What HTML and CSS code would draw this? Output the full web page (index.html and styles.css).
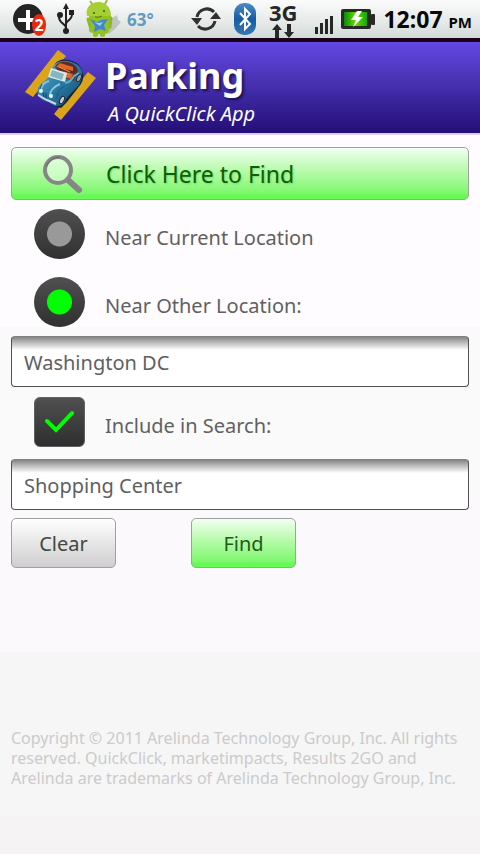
FILE: index.html
```html
<!DOCTYPE html>
<html lang="en">
<head>
<meta charset="utf-8">
<meta name="viewport" content="width=device-width, initial-scale=1">
<title>Parking</title>
<link rel="stylesheet" href="styles.css">
</head>
<body>
<div class="status">
  <svg class="plus" width="34" height="36" viewBox="0 0 34 36" aria-hidden="true">
    <circle cx="15" cy="18" r="15" fill="#242424"/>
    <path d="M13 9h4v8h8v4h-8v8h-4v-8H5v-4h8z" fill="#fff"/>
    <ellipse cx="26" cy="24" rx="7" ry="11" fill="#e5280f"/>
    <text x="26" y="30" text-anchor="middle" class="badge">2</text>
  </svg>
  <svg class="usb" width="18" height="32" viewBox="0 0 18 32" fill="none" stroke="#222" stroke-width="2" aria-hidden="true">
    <path d="M9 28V4M9 25C9 20 2 21 2 14M9 21c0-4 6-3 6-10"/>
    <path d="M9 0l3 6H6zM12 7h5v5h-5z" fill="#222" stroke="none"/>
    <circle cx="3" cy="12" r="3" fill="#222" stroke="none"/><circle cx="9" cy="28" r="3" fill="#222" stroke="none"/>
  </svg>
  <svg class="droid" width="36" height="38" viewBox="0 0 36 38" aria-hidden="true">
    <path d="M24 20l8-5 1 5 3 2-5 6-7 6z" fill="#aaa" opacity=".6"/>
    <path d="M8 5L5 1M20 4l2-4" stroke="#9bbb3c" stroke-width="2"/>
    <path d="M2 16C0 5 8 2 14 2s12 5 12 14z" fill="#a5cf32"/>
    <path d="M4 16h22l-2 15q0 3-4 3v2q-3 2-5 0v-2h-2v2q-3 2-5 0v-3q-4 0-4-3z" fill="#93c225"/>
    <path d="M3 19l2 7M26 18l-1 9" stroke="#8bb924" stroke-width="3" stroke-linecap="round"/>
    <circle cx="9" cy="13" r="1" fill="#415b16"/><circle cx="19" cy="11" r="1" fill="#415b16"/>
    <path d="M10 17q4 1 7-1" fill="none" stroke="#55741c"/>
    <path d="M5 19l7 3 4-2 7-1-4 6 2 6-6-2-6 3 1-6z" fill="#4384d5"/>
    <path d="M9 22l5 1 4-1-3 4z" fill="#9bd0f4"/>
  </svg>
  <span class="temp">63°</span>
  <svg class="sync" width="30" height="26" viewBox="0 0 30 26" fill="none" stroke="#303030" stroke-width="3" aria-hidden="true">
    <path d="M6 11A10 10 0 0 1 23 6M24 15A10 10 0 0 1 7 20"/>
    <path d="M0 12h11l-5 7zM19 13l6-7 5 7z" fill="#303030" stroke="none"/>
  </svg>
  <svg class="bt" width="22" height="32" viewBox="0 0 22 32" aria-hidden="true">
    <defs><linearGradient id="b" x2="0" y2="1"><stop stop-color="#4f8cc4"/><stop offset=".5" stop-color="#175ba5"/><stop offset="1" stop-color="#3677b4"/></linearGradient></defs>
    <rect width="22" height="32" rx="10" fill="url(#b)"/>
    <path d="M6 10l10 11-5 5V6l5 5L6 22" fill="none" stroke="#fff" stroke-width="2"/>
  </svg>
  <span class="net"><span>3G</span>
    <svg width="22" height="14" viewBox="0 0 22 14" fill="#282828" aria-hidden="true"><path d="M5 0l5 6H7v8H3V6H0zM15 0h4v8h3l-5 6-5-6h3z"/></svg>
  </span>
  <svg class="bars" width="18" height="20" viewBox="0 0 18 20" fill="#262626" aria-hidden="true"><path d="M0 12h3v7H0zM5 8h3v11H5zM10 4h3v15h-3zM15 1h3v18h-3z"/></svg>
  <svg class="battery" width="34" height="20" viewBox="0 0 34 20" aria-hidden="true">
    <defs><linearGradient id="g" x1="0" x2="1"><stop stop-color="#078b08"/><stop offset=".5" stop-color="#64d900"/><stop offset="1" stop-color="#16a907"/></linearGradient></defs>
    <rect width="30" height="20" rx="2" fill="#292929"/><rect x="30" y="5" width="4" height="11" rx="1" fill="#292929"/>
    <rect x="3" y="3" width="23" height="14" fill="url(#g)"/><path d="M16 2l-6 9h5l-3 7 10-10h-5l4-6z" fill="#fff"/>
  </svg>
  <span class="clock">12:07 <span class="pm">PM</span></span>
</div>
<header class="header">
  <svg class="logo" width="72" height="70" viewBox="0 0 72 70" aria-hidden="true">
    <defs><linearGradient id="c" x2="1" y2="1"><stop stop-color="#67b0cb"/><stop offset=".5" stop-color="#287ba5"/><stop offset="1" stop-color="#164565"/></linearGradient></defs>
    <path d="M33 0l8 6L8 47l-8-5zM63 22l8 6L36 70l-7-6z" fill="#dba51b"/>
    <path d="M30 14q4-6 14-4 10 2 13 10 3 7-1 14L42 52l-6 6-10-3z" fill="#15223d"/>
    <path d="M27 18Q32 9 43 11q11 2 14 10 1 7-3 14L41 49q-2 7-8 7-5 1-9-4-8-1-11-7-2-6 3-11l8-7z" fill="url(#c)"/>
    <path d="M30 17q4-7 13-5 8 2 10 8l-4 11-9-3z" fill="#5c2b25"/>
    <path d="M31 17l4-4 13 4v4l-4-1zM36 21l12 3-2 5-7-2z" fill="#df6428"/>
    <path d="M34 17l11 5M39 22l6 3" stroke="#f09142" stroke-width="1"/>
    <path d="M26 18l16 5-2 9-17-5z" fill="#d5e9ed"/>
    <path d="M27 20l12 4-2 6-12-4z" fill="#88b5bd"/>
    <path d="M40 33q6-1 9-7l5-3" fill="none" stroke="#5caec9" stroke-width="2"/>
    <path d="M24 31q-8 2-8 10M35 34q-10 4-10 12" fill="none" stroke="#84c5df" stroke-width="2"/>
    <path d="M17 34q-3 4-1 9M39 37q-7 2-7 11" fill="none" stroke="#1d587c" stroke-width="1"/>
    <path d="M18 42l1 6M21 43v6" stroke="#123b56" stroke-width="1"/>
    <path d="M13 45l9 5 9 4" fill="none" stroke="#c8d8e0" stroke-width="2"/>
    <circle cx="16" cy="41" r="2" fill="#e6fbff"/><circle cx="26" cy="46" r="2" fill="#e6fbff"/>
    <ellipse cx="37" cy="50" rx="2" ry="4" fill="#ccc" stroke="#1b2735" transform="rotate(25 37 50)"/>
    <ellipse cx="54" cy="28" rx="2" ry="4" fill="#8ba0aa" stroke="#1b2735" transform="rotate(25 54 28)"/>
  </svg>
  <div><h1>Parking</h1><p class="tagline">A QuickClick App</p></div>
</header>
<main class="main">
  <form class="form">
    <button class="btn green banner" type="button">
      <svg width="42" height="42" viewBox="0 0 42 42" fill="none" aria-hidden="true">
        <path d="M26 27l11 10" stroke="#858585" stroke-width="6" stroke-linecap="round"/>
        <circle cx="16" cy="17" r="13" fill="#dfffdc" fill-opacity=".6" stroke="#868686" stroke-width="4"/>
        <path d="M4 14Q8 4 18 4" stroke="#666" stroke-width="1"/>
      </svg>
      <span>Click Here to Find</span>
    </button>
    <label class="option first"><input class="radio" type="radio" name="near"><span>Near Current Location</span></label>
    <label class="option"><input class="radio" type="radio" name="near" checked><span>Near Other Location:</span></label>
    <input class="field" type="text" value="Washington DC" aria-label="Other location">
    <label class="option include">
      <span class="tick"><input type="checkbox" checked>
        <svg width="30" height="24" viewBox="0 0 30 24" fill="none" aria-hidden="true"><path d="M2 11l9 9L27 3" stroke="#0f0" stroke-width="4" stroke-linecap="round"/></svg>
      </span><span>Include in Search:</span></label>
    <input class="field" type="text" value="Shopping Center" aria-label="Search term">
    <div class="actions">
      <button class="btn grey" type="reset">Clear</button>
      <button class="btn green" type="button">Find</button>
    </div>
  </form>
</main>
<footer class="footer">Copyright © 2011 Arelinda Technology Group, Inc. All rights reserved. QuickClick, marketimpacts, Results 2GO and Arelinda are trademarks of Arelinda Technology Group, Inc.</footer>
</body>
</html>
```
FILE: styles.css
```css
* { box-sizing: border-box; }

body {
  margin: 0;
  min-height: 100vh;
  display: flex;
  flex-direction: column;
  font-family: "Noto Sans", "Open Sans", sans-serif;
  color: #606060;
  background: linear-gradient(#fefcfe 327px, #fafafa 327px, #fafafa 490px, #fbf9fb 490px, #fbf9fb 652px, #f6f6f6 652px, #f6f6f6 816px, #f5f3f4 816px);
}

.status {
  display: flex;
  align-items: center;
  height: 38px;
  padding: 0 8px 0 13px;
  background: linear-gradient(#fbfbfb, #e5e9e7 60%, #d2dad6);
  color: #080808;
}
.status svg { flex: none; }
.badge { font-size: 16px; font-weight: 700; fill: #fff; }
.usb { margin-left: 10px; }
.droid { margin-left: 10px; }
.temp { margin-left: 6px; font: 700 17px "Noto Sans", sans-serif; color: #6199c1; }
.sync { margin-left: auto; }
.bt { margin-left: 13px; }
.net { display: flex; flex-direction: column; align-items: center; margin-left: 13px; color: #262626; font-weight: 700; font-size: 22px; line-height: 24px; }
.bars { margin: 12px 0 0 18px; }
.battery { margin-left: 8px; }
.clock { margin-left: 8px; font-size: 23px; font-weight: 700; white-space: nowrap; }
.pm { font-size: 15px; }

.header {
  display: flex;
  align-items: flex-start;
  gap: 8px;
  height: 97px;
  padding: 8px 25px 0;
  border-top: 4px solid #1a0018;
  border-bottom: 2px solid #d8cff0;
  background: linear-gradient(#6448e4, #4731b0 45%, #230e78);
  color: #fff;
}
h1 { margin: 0; font-size: 36px; line-height: 52px; text-shadow: 2px 2px 3px #1b1050; }
.tagline { margin: 0 0 0 3px; font-size: 20px; line-height: 24px; font-style: italic; }

.main { padding: 12px 11px; }
.form { display: flex; flex-direction: column; }

.btn {
  height: 50px;
  border: 1px solid #a0a0a0;
  border-radius: 5px;
  font: 20px "Noto Sans", sans-serif;
  padding: 0;
}
.green { background: linear-gradient(#f2fff2, #b6fba9 45%, #80f76f 88%, #67fa55 92%); color: #1f5a1f; }
.grey { background: linear-gradient(#fff, #cfcdcf); color: #404840; }
.banner {
  display: flex;
  align-items: center;
  gap: 22px;
  height: 53px;
  padding-left: 30px;
  font-size: 23px;
  color: #086008;
  text-shadow: 1px 1px 2px #7bd66f;
}

.option { display: flex; align-items: center; gap: 20px; padding: 0 23px; margin-bottom: 9px; font-size: 20px; }
.option > span:last-child { padding-top: 7px; }
.first { margin: 9px 0 18px; }
.include { margin: 10px 0 12px; }

.radio, .tick input {
  appearance: none;
  flex: none;
  width: 51px;
  height: 50px;
  margin: 0;
  background: linear-gradient(#505050, #2e2e2e);
}
.radio { border-radius: 50%; background: radial-gradient(circle, #999 12px, transparent 13px), linear-gradient(#505050, #303030); }
.radio:checked { background: radial-gradient(circle, #0f0 12px, transparent 13px), linear-gradient(#505050, #303030); }
.tick { display: grid; place-items: center; }
.tick > * { grid-area: 1 / 1; }
.tick input { border: 1px solid #606060; border-radius: 6px; }
.tick svg { z-index: 1; pointer-events: none; }
.tick input:not(:checked) + svg { visibility: hidden; }

.field {
  width: 100%;
  height: 51px;
  padding: 2px 12px 0;
  border: 1px solid #505050;
  border-top-color: #808080;
  border-radius: 4px;
  background: linear-gradient(#858585, #b5b5b5 5px, #fff 13px);
  font: 20px "Noto Sans", sans-serif;
  color: #606060;
}

.actions { display: flex; gap: 75px; margin-top: 8px; }
.actions .btn { width: 105px; }

.footer { margin-top: auto; padding: 0 11px 66px; font-size: 16px; line-height: 20px; color: #cbcbcb; }
```
